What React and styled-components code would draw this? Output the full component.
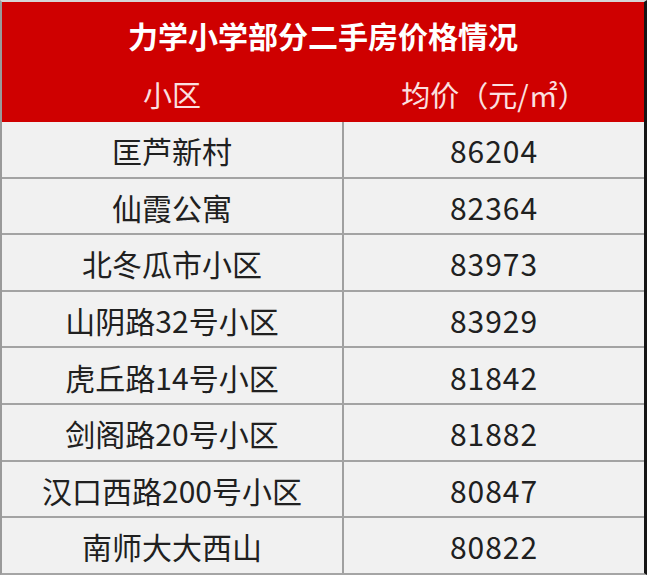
import styled, { createGlobalStyle } from "styled-components";

const GlobalStyle = createGlobalStyle`
  html, body {
    margin: 0;
    padding: 0;
    background: #ffffff;
  }
  body {
    font-family: "Noto Sans CJK SC", "Microsoft YaHei", sans-serif;
  }
`;

const Frame = styled.div`
  width: 642px;
  border-top: 2px solid #d6d6d6;
  border-left: 2px solid #9a9a9a;
  border-right: 3px solid #151515;
  border-bottom: 2px solid #a5a5a5;
`;

const Title = styled.div`
  height: 62px;
  display: flex;
  align-items: center;
  justify-content: center;
  padding-top: 4px;
  box-sizing: border-box;
  background-color: #cf0000;
  color: #ffffff;
  font-size: 30px;
  font-weight: bold;
`;

const HeadRow = styled.div`
  height: 58px;
  display: grid;
  grid-template-columns: 340px 2px 300px;
  background-color: #cf0000;
  color: #fbe0e0;
  font-size: 29px;
`;

const Row = styled.div`
  height: 54.6px;
  display: grid;
  grid-template-columns: 340px 2px 300px;
  background-color: #f1f1f1;
  color: #202020;
  font-size: 30px;
  border-bottom: ${(p) => (p.$last ? "none" : "2px solid #a3a3a3")};
`;

const Cell = styled.div`
  display: flex;
  align-items: center;
  justify-content: center;
  padding-top: 2px;
  box-sizing: border-box;
  letter-spacing: ${(p) => (p.$num ? "1px" : "0")};
`;

const Divider = styled.div`
  background-color: ${(p) => (p.$head ? "#cf0000" : "#a0a0a0")};
`;

const rows = [
  ["匡芦新村", "86204"],
  ["仙霞公寓", "82364"],
  ["北冬瓜市小区", "83973"],
  ["山阴路32号小区", "83929"],
  ["虎丘路14号小区", "81842"],
  ["剑阁路20号小区", "81882"],
  ["汉口西路200号小区", "80847"],
  ["南师大大西山", "80822"],
];

export default function App() {
  return (
    <>
      <GlobalStyle />
      <Frame>
        <Title>力学小学部分二手房价格情况</Title>
        <HeadRow>
          <Cell>小区</Cell>
          <Divider $head />
          <Cell>均价（元/㎡）</Cell>
        </HeadRow>
        {rows.map(([name, price], i) => (
          <Row key={name} $last={i === rows.length - 1}>
            <Cell>{name}</Cell>
            <Divider />
            <Cell $num>{price}</Cell>
          </Row>
        ))}
      </Frame>
    </>
  );
}
